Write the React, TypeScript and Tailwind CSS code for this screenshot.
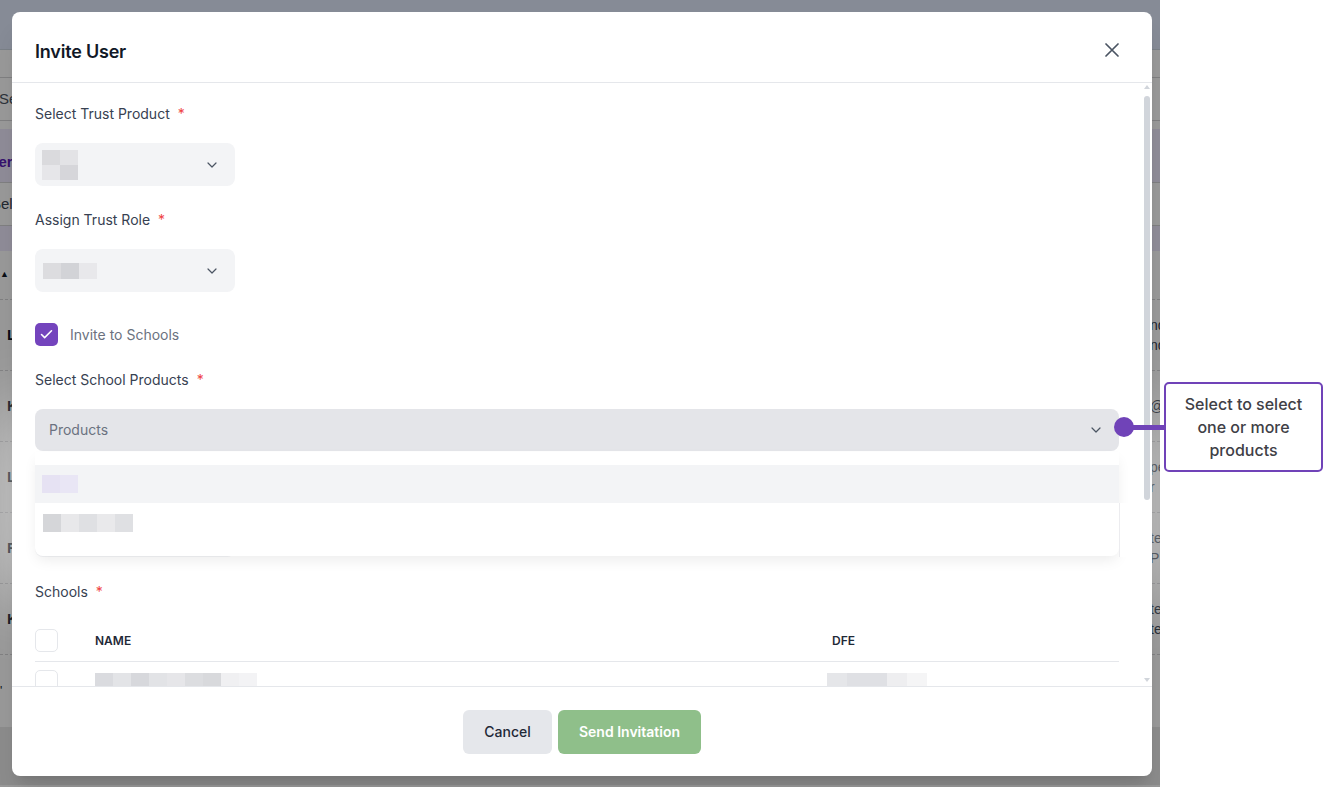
import { ChevronDown, Check } from 'lucide-react';

// Pixelated placeholder blocks for values that are masked out
function Pixels({ cells, cell }: { cells: string[]; cell: string }) {
  return (
    <div className="flex">
      {cells.map((c, i) => (
        <div key={i} className={`${cell} ${c}`} />
      ))}
    </div>
  );
}

function Label({ text }: { text: string }) {
  return (
    <div className="text-sm leading-5 text-[#374151]">
      {text}
      <span className="ml-2 text-[#ef4444]">*</span>
    </div>
  );
}

// The users page sitting behind the dimmed overlay
function UsersPage() {
  const rows = [
    { lead: 'L', tail: ['nd', 'nd'] },
    { lead: 'K', tail: ['@s'] },
    { lead: 'L', tail: ['pe', 'r'] },
    { lead: 'F', tail: ['te', 'PI'] },
    { lead: 'K', tail: ['te', 'te'] },
  ];
  return (
    <div className="flex h-full flex-col bg-white font-['Liberation_Sans',sans-serif] text-[15px] text-[#111827]">
      <div className="h-[50px] shrink-0 border-b border-[#cbd5e1] bg-[#dfe8fb]" />
      <div className="h-[27px] shrink-0" />
      <div className="flex h-[44px] shrink-0 items-center border-y border-[#d4d4d8] text-[#4b5563]">
        <span className="-ml-[1px]">Search</span>
      </div>
      <div className="h-[8px] shrink-0" />
      <div className="flex h-[53px] shrink-0 items-end bg-[#efe9fd] pb-[9px] font-semibold text-[#5b21b6]">
        <span className="-ml-[24px]">Filter</span>
      </div>
      <div className="flex h-[44px] shrink-0 items-center border-y border-[#d4d4d8] text-[#374151]">
        <span className="-ml-[9px]">Select</span>
      </div>
      <div className="h-[25px] shrink-0 bg-[#efe9fd]" />
      <div className="flex h-[48px] shrink-0 items-center text-[9px]">▲</div>
      {rows.map((r, i) => (
        <div key={i} className="grid h-[71px] shrink-0 grid-cols-[1150px_1fr] items-center border-t border-dashed border-[#d4d4d8]">
          <span className="pl-[7px] font-bold">{r.lead}</span>
          <div className="flex flex-col text-[14px] leading-5 text-[#374151]">
            {r.tail.map((t, j) => (
              <span key={j}>{t}</span>
            ))}
          </div>
        </div>
      ))}
      <div className="flex h-[73px] shrink-0 items-center border-t border-dashed border-[#d4d4d8] text-[12px]">'</div>
      <div className="h-[58px] shrink-0 bg-[#e9e9e9]" />
      <div className="flex-1 bg-white" />
    </div>
  );
}

export default function App() {
  return (
    <div className="relative flex h-[787px] w-[1325px] overflow-hidden bg-white font-['Inter',sans-serif]">
      <div className="relative h-[787px] w-[1160px] shrink-0 overflow-hidden">
        <UsersPage />
        <div className="absolute inset-0 bg-black/40" />
        {/* spotlight around the open products menu */}
        <div className="absolute left-[35px] top-[452px] h-[104px] w-[1084px] shadow-[0_0_70px_40px_rgba(255,255,255,0.5)]" />

        {/* Invite dialog */}
        <div className="absolute left-[12px] top-[12px] flex h-[764px] w-[1140px] flex-col overflow-hidden rounded-lg bg-white shadow-xl">
          <div className="flex h-[71px] shrink-0 items-start justify-between border-b border-[#e5e7eb] pl-[23px] pr-[33px] pt-[26px]">
            <h2 className="text-[18px] font-semibold leading-7 tracking-[-0.2px] text-[#111827]">Invite User</h2>
            <button type="button" aria-label="Close" className="mt-[5px]">
              <svg width="14" height="14" viewBox="0 0 14 14" fill="none" stroke="#4b5563" strokeWidth="1.7" strokeLinecap="round">
                <path d="M1 1l12 12M13 1L1 13" />
              </svg>
            </button>
          </div>

          <div className="relative flex h-[603px] shrink-0 overflow-hidden">
            <div className="w-[1132px] shrink-0 pl-[23px] pr-[25px] pt-[21px]">
              <Label text="Select Trust Product" />
              <div className="mt-[19px] flex h-[43px] w-[200px] items-center justify-between rounded-lg bg-[#f3f4f6] pl-[7px] pr-[15px]">
                <div className="flex flex-col">
                  <Pixels cell="h-[15px] w-[18px]" cells={['bg-[#dadadd]', 'bg-[#e3e3e6]']} />
                  <Pixels cell="h-[15px] w-[18px]" cells={['bg-[#e6e6e9]', 'bg-[#d6d6da]']} />
                </div>
                <ChevronDown size={16} strokeWidth={1.8} className="text-[#4b5563]" />
              </div>

              <div className="mt-[24px]">
                <Label text="Assign Trust Role" />
              </div>
              <div className="mt-[19px] flex h-[43px] w-[200px] items-center justify-between rounded-lg bg-[#f3f4f6] pl-[8px] pr-[15px]">
                <Pixels cell="h-[16px] w-[18px]" cells={['bg-[#dcdcdf]', 'bg-[#d2d3d7]', 'bg-[#e8e8eb]']} />
                <ChevronDown size={16} strokeWidth={1.8} className="text-[#4b5563]" />
              </div>

              <div className="mt-[31px] flex items-center gap-[12px]">
                <div className="flex h-[23px] w-[23px] items-center justify-center rounded-[5px] bg-[#7444bd]">
                  <Check size={15} strokeWidth={2.5} className="text-white" />
                </div>
                <span className="text-sm text-[#6b7280]">Invite to Schools</span>
              </div>

              <div className="mt-[24px]">
                <Label text="Select School Products" />
              </div>
              <div className="relative mt-[19px]">
                <div className="flex h-[42px] items-center justify-between rounded-lg bg-[#e4e5e9] pl-[14px] pr-[15px]">
                  <span className="text-sm text-[#6b7280]">Products</span>
                  <ChevronDown size={16} strokeWidth={1.8} className="text-[#4b5563]" />
                </div>
                <div className="absolute left-0 right-0 top-[43px] z-10 h-[104px] rounded-b-lg bg-white pt-[13px] shadow-[0_6px_14px_-2px_rgba(0,0,0,0.08)]">
                  <div className="flex h-[38px] items-center bg-[#f3f4f6] pl-[7px]">
                    <Pixels cell="h-[18px] w-[18px]" cells={['bg-[#e6e2f3]', 'bg-[#e9e6f5]']} />
                  </div>
                  <div className="flex h-[40px] items-center pl-[8px]">
                    <Pixels cell="h-[18px] w-[18px]" cells={['bg-[#d5d6d9]', 'bg-[#e8e8ea]', 'bg-[#dfe0e3]', 'bg-[#e9e9eb]', 'bg-[#dfe0e3]']} />
                  </div>
                  <div className="absolute left-full top-[51px] h-[54px] w-[33px] border-l border-[#ececef] bg-white" />
                </div>
              </div>

              {/* selected products list, covered by the open menu */}
              <div className="mt-[63px] h-[43px] w-[200px] rounded-lg bg-[#f3f4f6]" />

              <div className="mt-[25px]">
                <Label text="Schools" />
              </div>
              <div className="mt-[27px]">
                <div className="flex items-center border-b border-[#e5e7eb] pb-[9px]">
                  <div className="w-[60px]">
                    <div className="h-[23px] w-[23px] rounded-[5px] border border-[#e5e7eb] bg-white" />
                  </div>
                  <div className="w-[737px] text-xs font-semibold text-[#1f2937]">NAME</div>
                  <div className="text-xs font-semibold text-[#1f2937]">DFE</div>
                </div>
                <div className="flex items-start pt-[8px]">
                  <div className="w-[60px]">
                    <div className="h-[23px] w-[23px] rounded-[5px] border border-[#e5e7eb] bg-white" />
                  </div>
                  <div className="w-[732px] pt-[3px]">
                    <Pixels
                      cell="h-[18px] w-[18px]"
                      cells={['bg-[#dadbdf]', 'bg-[#e3e4e7]', 'bg-[#d7d8dc]', 'bg-[#e2e3e6]', 'bg-[#e6e6e9]', 'bg-[#dcdde0]', 'bg-[#d8d9dc]', 'bg-[#f0f0f2]', 'bg-[#f3f3f5]']}
                    />
                  </div>
                  <div className="pt-[3px]">
                    <Pixels cell="h-[18px] w-[20px]" cells={['bg-[#e5e6e9]', 'bg-[#dfe0e4]', 'bg-[#dfe0e4]', 'bg-[#eeeef0]', 'bg-[#f5f5f6]']} />
                  </div>
                </div>
              </div>
            </div>

            {/* thin scrollbar */}
            <div className="flex w-[6px] shrink-0 flex-col items-center pt-[2px]">
              <div className="h-0 w-0 border-x-[3px] border-b-[4px] border-x-transparent border-b-[#d1d5db]" />
              <div className="mt-[7px] h-[404px] w-[6px] rounded-full bg-[#d1d5db]" />
              <div className="mb-[4px] mt-auto h-0 w-0 border-x-[3px] border-t-[4px] border-x-transparent border-t-[#d1d5db]" />
            </div>
          </div>

          <div className="flex h-[90px] shrink-0 justify-center gap-[6px] border-t border-[#e5e7eb] pt-[23px]">
            <button type="button" className="h-[44px] w-[89px] rounded-md bg-[#e5e7eb] text-sm font-medium text-[#1f2937]">
              Cancel
            </button>
            <button type="button" disabled className="h-[44px] w-[143px] rounded-md bg-[#8fbf8a] text-sm font-semibold text-white">
              Send Invitation
            </button>
          </div>
        </div>
      </div>

      <div className="flex-1 bg-white" />

      {/* annotation pointing at the products select */}
      <div className="absolute left-[1114px] top-[417px] h-[20px] w-[20px] rounded-full bg-[#7043b8]" />
      <div className="absolute left-[1124px] top-[425px] h-[5px] w-[41px] bg-[#7043b8]" />
      <div className="absolute left-[1164px] top-[382px] flex h-[90px] w-[159px] items-center justify-center rounded-[5px] border-2 border-[#7043b8] bg-white text-center text-[16px] font-medium leading-[23px] text-[#404046]">
        Select to select
        <br />
        one or more
        <br />
        products
      </div>
    </div>
  );
}
